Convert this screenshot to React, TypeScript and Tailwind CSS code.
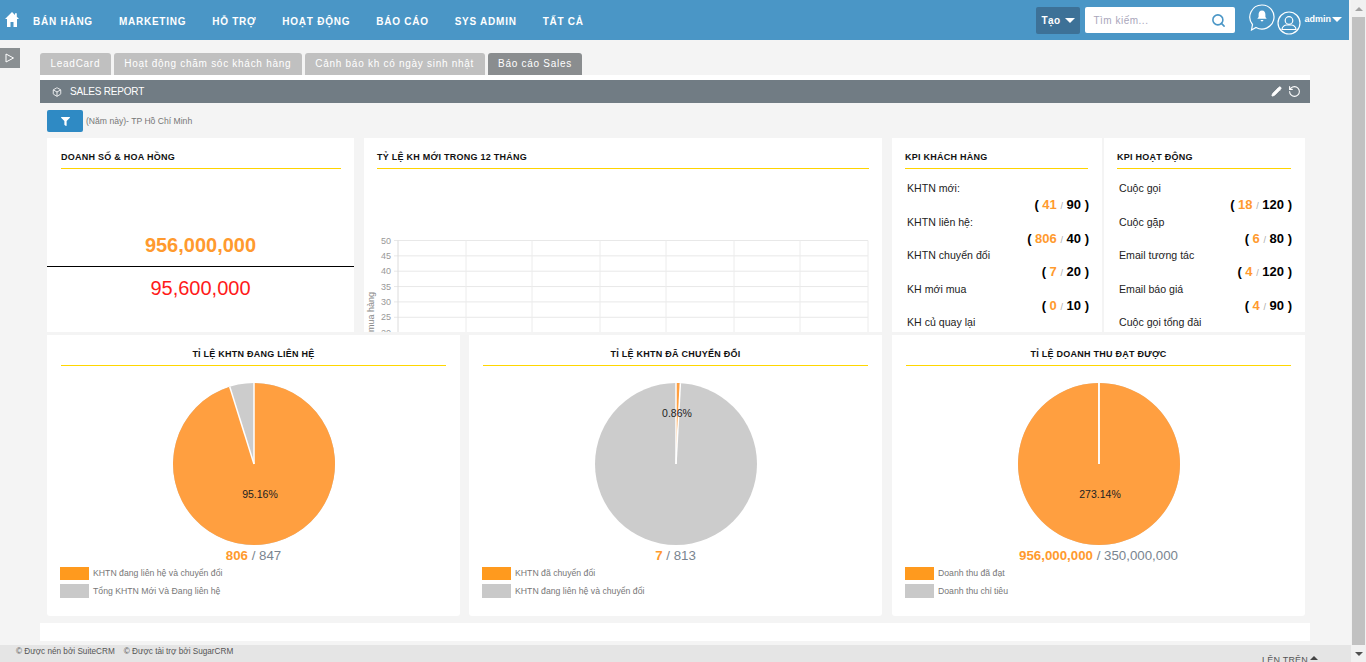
import { Box, Pencil, RotateCcw, Search } from "lucide-react";
import { FaFilter } from "react-icons/fa";

const NAV_ITEMS = ["BÁN HÀNG", "MARKETING", "HỖ TRỢ", "HOẠT ĐỘNG", "BÁO CÁO", "SYS ADMIN", "TẤT CẢ"];
const TABS = ["LeadCard", "Hoạt động chăm sóc khách hàng", "Cảnh báo kh có ngày sinh nhật"];
const KPI_CUSTOMER = [
  { label: "KHTN mới:", done: 41, target: 90 },
  { label: "KHTN liên hệ:", done: 806, target: 40 },
  { label: "KHTN chuyển đổi", done: 7, target: 20 },
  { label: "KH mới mua", done: 0, target: 10 },
  { label: "KH củ quay lại", done: 0, target: 0 },
];
const KPI_ACTIVITY = [
  { label: "Cuộc gọi", done: 18, target: 120 },
  { label: "Cuộc gặp", done: 6, target: 80 },
  { label: "Email tương tác", done: 4, target: 120 },
  { label: "Email báo giá", done: 4, target: 90 },
  { label: "Cuộc gọi tổng đài", done: 0, target: 0 },
];

function Caret() {
  return <span className="inline-block w-0 h-0 border-x-[5px] border-x-transparent border-t-[5px] border-t-white" />;
}

function CardTitle({ children }: { children: string }) {
  return (
    <div className="h-[31px] border-b border-[#ffd400] pt-[13px] text-[9px] leading-[13px] font-bold tracking-[0.25px] text-[#111]">
      {children}
    </div>
  );
}

function KpiCard({ title, rows, className }: { title: string; rows: typeof KPI_CUSTOMER; className: string }) {
  return (
    <div className={`h-[194px] overflow-hidden bg-white ${className}`}>
      <CardTitle>{title}</CardTitle>
      <div className="pt-[12px]">
        {rows.map((row) => (
          <div key={row.label} className="h-[33.5px]">
            <div className="pl-[2px] text-[10.6px] leading-[14px] text-[#222]">{row.label}</div>
            <div className="-mr-[1px] mt-[1px] text-right text-[13px] leading-[17px] font-bold text-black">
              ( <span className="text-[#ff9a2e]">{row.done}</span>{" "}
              <span className="text-[9px] font-normal text-[#aaa]">/</span> {row.target} )
            </div>
          </div>
        ))}
      </div>
    </div>
  );
}

function LineChartGrid() {
  const ys = [50, 45, 40, 35, 30, 25, 20];
  const xs = [34, 102, 168, 236, 302, 370, 436, 504];
  return (
    <svg width="518" height="100" className="block overflow-visible">
      {ys.map((v, i) => {
        const y = 7.5 + i * 15.35;
        return (
          <g key={v}>
            <line x1="30" x2="504" y1={y} y2={y} stroke="#e8e8e8" />
            <text x="27" y={y + 3} textAnchor="end" fontSize="9" fill="#999" fontFamily="Liberation Sans">
              {v}
            </text>
          </g>
        );
      })}
      {xs.map((x) => (
        <line key={x} x1={x} x2={x} y1="7.5" y2="100" stroke={x === 34 ? "#dcdcdc" : "#ececec"} />
      ))}
      <text transform="translate(10 99) rotate(-90)" fontSize="9" fill="#888" fontFamily="Liberation Sans">
        mua hàng
      </text>
    </svg>
  );
}

function Pie({ pct, label, labelX, labelY }: { pct: number; label: string; labelX: number; labelY: number }) {
  const r = 81;
  const c = 82;
  const a = Math.min(pct, 0.9999) * 2 * Math.PI;
  const ex = c + r * Math.sin(a);
  const ey = c - r * Math.cos(a);
  const large = pct > 0.5 ? 1 : 0;
  return (
    <svg width="164" height="164" className="block mx-auto">
      <circle cx={c} cy={c} r={r} fill="#cccccc" />
      <path d={`M${c} ${c}L${c} ${c - r}A${r} ${r} 0 ${large} 1 ${ex} ${ey}Z`} fill="#ff9f40" />
      <line x1={c} y1={c} x2={c} y2={c - r} stroke="#fff" strokeWidth="1.5" />
      <line x1={c} y1={c} x2={ex} y2={ey} stroke="#fff" strokeWidth="1.5" />
      <text x={labelX} y={labelY} textAnchor="middle" fontSize="10.5" fill="#222" fontFamily="Liberation Sans">
        {label}
      </text>
    </svg>
  );
}

function PieCard({
  title,
  pct,
  pctLabel,
  labelX,
  labelY,
  done,
  total,
  legendA,
  legendB,
  className,
}: {
  title: string;
  pct: number;
  pctLabel: string;
  labelX: number;
  labelY: number;
  done: string;
  total: string;
  legendA: string;
  legendB: string;
  className: string;
}) {
  return (
    <div className={`h-[281px] w-[413px] rounded-b-[3px] bg-white px-[14px] ${className}`}>
      <div className="h-[31px] border-b border-[#ffd700] pt-[13px] text-center text-[9px] leading-[13px] font-bold tracking-[0.25px] text-[#111]">
        {title}
      </div>
      <div className="pt-[16px]">
        <Pie pct={pct} label={pctLabel} labelX={labelX} labelY={labelY} />
      </div>
      <div className="mt-[2px] text-center text-[13.3px] leading-[16px] text-[#7a8590]">
        <span className="font-bold text-[#ff9a2e]">{done}</span> / {total}
      </div>
      <div className="-ml-[1px] mt-[3px] space-y-[4px]">
        <div className="flex items-center gap-[4px] text-[8.7px] leading-[13px] text-[#777]">
          <span className="h-[13px] w-[29px] bg-[#ff9a1e]" />
          {legendA}
        </div>
        <div className="flex items-center gap-[4px] text-[8.7px] leading-[14px] text-[#777]">
          <span className="h-[14px] w-[29px] bg-[#c9c9c9]" />
          {legendB}
        </div>
      </div>
    </div>
  );
}

function NavBar() {
  return (
    <div className="flex h-[40px] w-[1349px] bg-[#4a96c6] text-white">
      <div className="flex h-full items-center pb-[1px] pl-[5px]">
        <svg width="14" height="15" viewBox="0 0 14 15" fill="#fff">
          <path d="M7 0 0 7h2v8h3.5v-5h3v5H12V7h2l-2.2-2.2V1.2H10v1.8Z" />
        </svg>
      </div>
      <div className="ml-[14px] flex h-full items-center gap-[26px] pt-[2px]">
        {NAV_ITEMS.map((item) => (
          <span key={item} className="text-[10px] font-bold tracking-[0.75px]">
            {item}
          </span>
        ))}
      </div>
      <div className="ml-auto flex items-start pr-[7px]">
        <div className="mt-[7px] flex h-[27px] w-[44px] items-center justify-center gap-[5px] rounded-[2px] bg-[#3d7197] text-[10px] font-bold tracking-[0.4px]">
          Tạo <Caret />
        </div>
        <div className="mt-[7px] ml-[5px] flex h-[26px] w-[150px] items-center justify-between rounded-[2px] bg-white pr-[9px] pl-[8px] text-[10px] tracking-[0.5px] text-[#a9a6bb]">
          Tìm kiếm...
          <Search className="size-[15px] text-[#4a96c6]" strokeWidth={2.5} />
        </div>
        <svg width="28" height="28" viewBox="0 0 28 28" fill="none" className="mt-[3px] ml-[13px]">
          <path d="M14 2a12 12 0 1 1-6 22.4L3.5 27l1-5.5A12 12 0 0 1 14 2Z" stroke="#fff" strokeWidth="1.2" />
          <path d="M14 7.5c-2.4 0-3.4 1.8-3.4 4v2.6l-1.3 1.7h9.4l-1.3-1.7v-2.6c0-2.2-1-4-3.4-4ZM12.6 17h2.8a1.4 1.4 0 0 1-2.8 0Z" fill="#fff" />
        </svg>
        <svg width="24" height="24" viewBox="0 0 24 24" fill="none" className="mt-[11px] ml-[1px]">
          <circle cx="12" cy="12" r="11" stroke="#fff" strokeWidth="1.2" />
          <circle cx="12" cy="9.5" r="3.8" stroke="#fff" strokeWidth="1.2" />
          <path d="M5 18.5c0-3 3-4.5 4.5-4.5h5c1.5 0 4.5 1.5 4.5 4.5Z" stroke="#fff" strokeWidth="1.2" />
        </svg>
        <div className="mt-[13px] ml-[3px] flex items-center gap-[1px] text-[9px] leading-[12px] font-bold">
          admin <Caret />
        </div>
      </div>
    </div>
  );
}

function Scrollbar() {
  return (
    <div className="flex h-full w-[15px] flex-col items-center bg-[#f1f1f1]">
      <div className="flex h-[17px] items-center justify-center">
        <span className="h-0 w-0 border-x-[4px] border-b-[4px] border-x-transparent border-b-[#a3a3a3]" />
      </div>
      <div className="w-[13px] flex-1 bg-[#c1c1c1]" />
      <div className="flex h-[17px] items-center justify-center">
        <span className="h-0 w-0 border-x-[4px] border-t-[4px] border-x-transparent border-t-[#505050]" />
      </div>
    </div>
  );
}

export default function App() {
  return (
    <div
      className="flex h-[662px] w-[1366px] overflow-hidden bg-[#f4f4f4]"
      style={{ fontFamily: '"Liberation Sans", Arial, sans-serif' }}
    >
      <div className="relative flex w-[1351px] flex-col">
        <NavBar />

        {/* Sidebar toggle */}
        <div className="absolute top-[48px] left-0 flex h-[20px] w-[20px] items-center justify-center bg-[#8a8f92]">
          <svg width="10" height="10" viewBox="0 0 10 10" fill="none">
            <path d="M1 1l7.5 4L1 9Z" stroke="#fff" strokeWidth="1" />
          </svg>
        </div>

        <div className="h-[605px] overflow-hidden pt-[13px] pr-[41px] pl-[40px]">
          {/* Tabs */}
          <div className="flex gap-[3px]">
            {TABS.map((tab) => (
              <div
                key={tab}
                className="flex h-[22px] items-center rounded-t-[3px] bg-[#c0c0c0] px-[10.5px] pb-[1px] text-[10px] tracking-[0.72px] text-white"
              >
                {tab}
              </div>
            ))}
            <div className="flex h-[22px] items-center rounded-t-[3px] bg-[#8a8d8f] px-[10.5px] pb-[1px] text-[10px] tracking-[0.72px] text-white">
              Báo cáo Sales
            </div>
          </div>

          {/* Section bar */}
          <div className="bg-white pt-[5px]">
            <div className="flex h-[23px] items-center bg-[#717c84] pr-[9px] pl-[12px] text-white">
              <Box className="size-[10px]" />
              <span className="ml-[8px] text-[10px] tracking-[-0.2px]">SALES REPORT</span>
              <Pencil className="ml-auto size-[11px]" fill="#fff" />
              <RotateCcw className="ml-[6px] size-[13px]" />
            </div>
          </div>

          <div className="pl-[7px]">
            {/* Filter */}
            <div className="flex h-[35px] items-start pt-[7px]">
              <div className="flex h-[22px] w-[36px] items-center justify-center rounded-[2px] bg-[#2f8ac4] text-white">
                <FaFilter className="size-[9px]" />
              </div>
              <span className="ml-[3px] pt-[5px] text-[8.6px] leading-[12px] text-[#777]">(Năm này)- TP Hồ Chí Minh</span>
            </div>

            {/* Top row */}
            <div className="flex">
              <div className="h-[194px] w-[307px] overflow-hidden bg-white">
                <div className="pr-[13px] pl-[14px]">
                  <CardTitle>DOANH SỐ &amp; HOA HỒNG</CardTitle>
                </div>
                <div className="mt-[63px] text-center text-[20px] leading-[27px] font-bold text-[#ff9a2e]">956,000,000</div>
                <div className="mt-[7px] h-[1px] bg-black" />
                <div className="mt-[8px] text-center text-[20px] leading-[27px] text-[#ff1a1a]">95,600,000</div>
              </div>
              <div className="ml-[10px] h-[194px] w-[518px] overflow-hidden bg-white">
                <div className="px-[13px]">
                  <CardTitle>TỶ LỆ KH MỚI TRONG 12 THÁNG</CardTitle>
                </div>
                <div className="pt-[64px]">
                  <LineChartGrid />
                </div>
              </div>
              <KpiCard title="KPI KHÁCH HÀNG" rows={KPI_CUSTOMER} className="ml-[10px] w-[210px] pr-[14px] pl-[13px]" />
              <KpiCard title="KPI HOẠT ĐỘNG" rows={KPI_ACTIVITY} className="ml-[2px] w-[201px] pr-[14px] pl-[13px]" />
            </div>

            {/* Pie row */}
            <div className="mt-[3px] flex gap-[9px]">
              <PieCard
                title="TỈ LỆ KHTN ĐANG LIÊN HỆ"
                pct={0.9516}
                pctLabel="95.16%"
                labelX={88}
                labelY={116}
                done="806"
                total="847"
                legendA="KHTN đang liên hệ và chuyển đổi"
                legendB="Tổng KHTN Mới Và Đang liên hệ"
                className=""
              />
              <PieCard
                title="TỈ LỆ KHTN ĐÃ CHUYỂN ĐỔI"
                pct={0.0086}
                pctLabel="0.86%"
                labelX={83}
                labelY={35}
                done="7"
                total="813"
                legendA="KHTN đã chuyển đổi"
                legendB="KHTN đang liên hệ và chuyển đổi"
                className=""
              />
              <PieCard
                title="TỈ LỆ DOANH THU ĐẠT ĐƯỢC"
                pct={1}
                pctLabel="273.14%"
                labelX={83}
                labelY={116}
                done="956,000,000"
                total="350,000,000"
                legendA="Doanh thu đã đạt"
                legendB="Doanh thu chỉ tiêu"
                className="ml-[1px]"
              />
            </div>
          </div>

          <div className="mt-[7px] h-[18px] bg-white" />
        </div>

        {/* Footer */}
        <div className="flex h-[17px] bg-[#e5e5e5] text-[8.2px] text-[#555]">
          <span className="ml-[16px] pt-[1px]">© Được nén bởi SuiteCRM</span>
          <span className="ml-[9px] pt-[1px]">© Được tài trợ bởi SugarCRM</span>
          <span className="mr-[33px] ml-auto flex items-start gap-[2px] pt-[10px] text-[9px] leading-[10px] tracking-[0.2px]">
            LÊN TRÊN
            <span className="mt-[1px] h-0 w-0 border-x-[4px] border-b-[4px] border-x-transparent border-b-[#444]" />
          </span>
        </div>
      </div>
      <Scrollbar />
    </div>
  );
}
